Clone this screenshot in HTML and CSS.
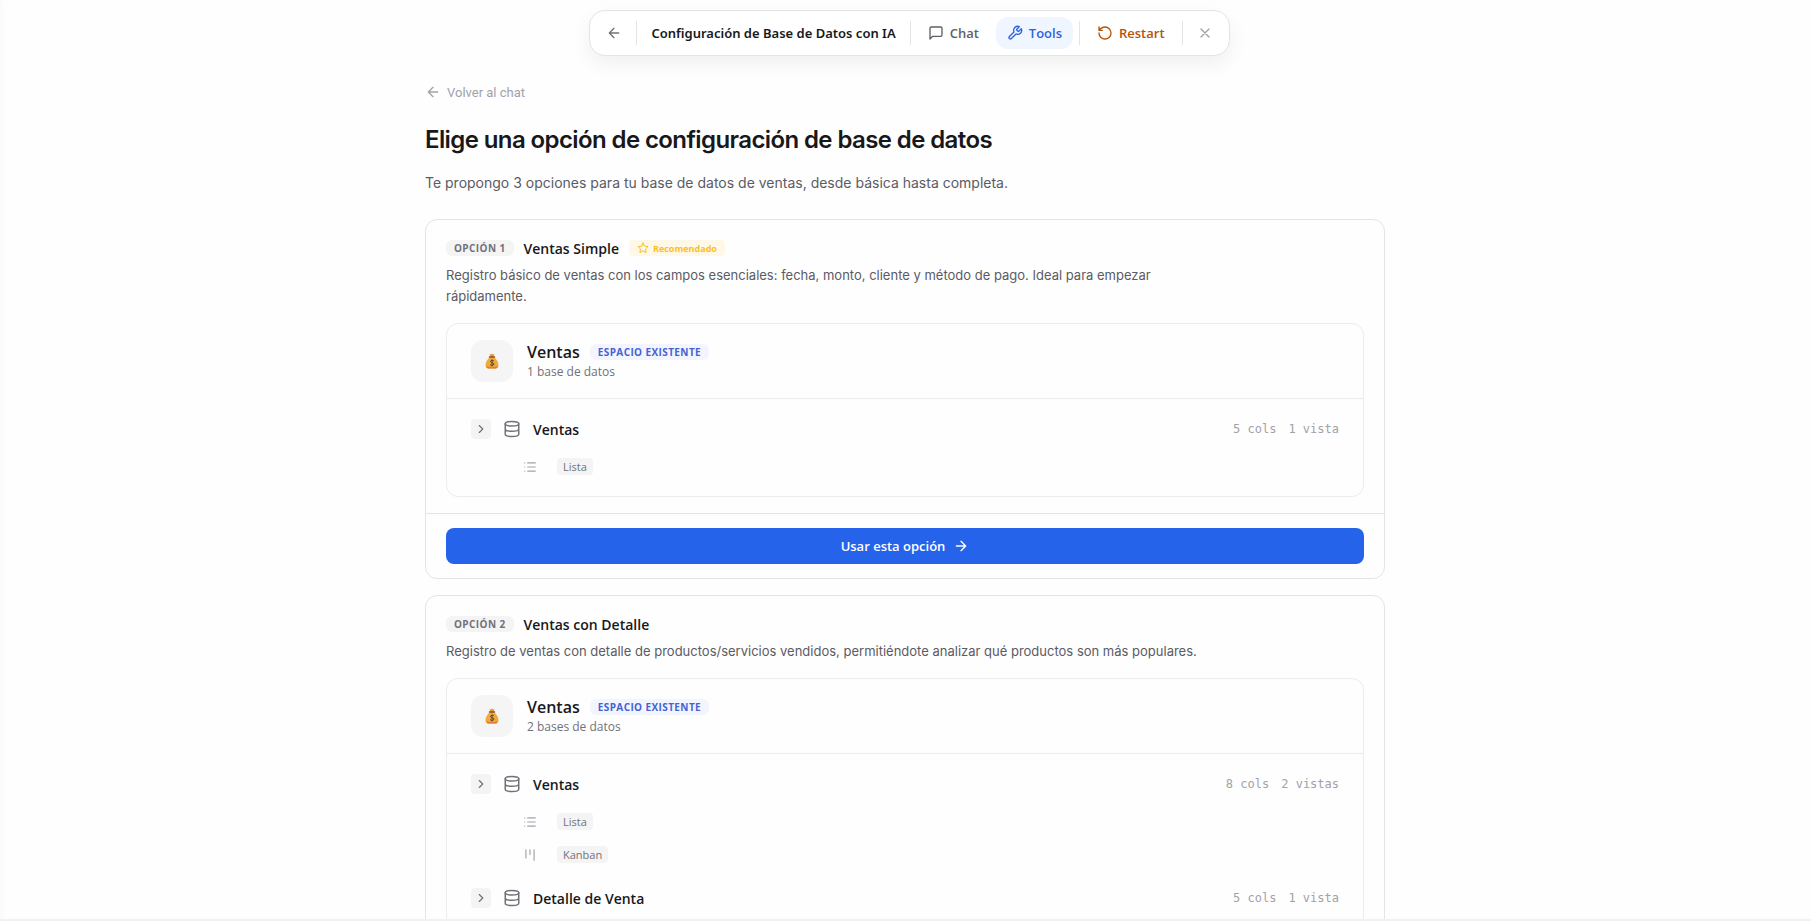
FILE: index.html
```html
<!DOCTYPE html>
<html lang="es">
<head>
    <meta charset="UTF-8">
    <meta name="viewport" content="width=device-width, initial-scale=1.0">
    <title>Configuración de Base de Datos con IA</title>
    <link rel="stylesheet" href="styles.css">
</head>
<body>

<!-- Iconos compartidos -->
<svg class="sprite" aria-hidden="true">
    <symbol id="arrow-left" viewBox="0 0 24 24"><path d="M12 19l-7-7 7-7M19 12H5"/></symbol>
    <symbol id="arrow-right" viewBox="0 0 24 24"><path d="M5 12h14M12 5l7 7-7 7"/></symbol>
    <symbol id="chevron" viewBox="0 0 24 24"><path d="M9 18l6-6-6-6"/></symbol>
    <symbol id="database" viewBox="0 0 24 24"><ellipse cx="12" cy="5" rx="9" ry="3"/><path d="M3 5v14a9 3 0 0 0 18 0V5M3 12a9 3 0 0 0 18 0"/></symbol>
    <symbol id="list" viewBox="0 0 24 24"><path d="M3 5h.01M3 12h.01M3 19h.01M8 5h13M8 12h13M8 19h13"/></symbol>
    <symbol id="kanban" viewBox="0 0 24 24"><path d="M5 3v14M12 3v8M19 3v18"/></symbol>
    <symbol id="money-bag" viewBox="0 0 28 32">
        <path d="M9 2l3 1 2-2 2 2 3-1-2 6h-6z" fill="#e39a2d"/>
        <path d="M10 8h8c5 4 9 10 9 16 0 5-3 7-7 7H8c-4 0-7-2-7-7C1 18 5 12 10 8z" fill="#f2a93b"/>
        <path d="M2 26c2 3 22 3 24 0-1 4-3 5-6 5H8c-3 0-5-1-6-5z" fill="#db7c2e"/>
        <path d="M9 8h10" stroke="#8a4b2a" stroke-width="3" stroke-linecap="round"/>
        <path d="M18 16c-1-2-7-2-7 1s7 2 7 5-6 4-8 1M14 13v14" fill="none" stroke="#5b4536" stroke-width="2"/>
    </symbol>
</svg>

<div class="app">
    <header class="toolbar-wrap">
        <nav class="toolbar">
            <button class="icon-button" aria-label="Volver"><svg class="icon"><use href="#arrow-left"/></svg></button>
            <span class="divider"></span>
            <span class="toolbar-title">Configuración de Base de Datos con IA</span>
            <span class="divider"></span>
            <button class="tool-button">
                <svg class="icon" viewBox="0 0 24 24"><path d="M21 15a2 2 0 0 1-2 2H7l-4 4V5a2 2 0 0 1 2-2h14a2 2 0 0 1 2 2z"/></svg>
                Chat
            </button>
            <button class="tool-button active">
                <svg class="icon" viewBox="0 0 24 24"><path d="M14.7 6.3a1 1 0 0 0 0 1.4l1.6 1.6a1 1 0 0 0 1.4 0l3.77-3.77a6 6 0 0 1-7.94 7.94l-6.91 6.91a2.12 2.12 0 0 1-3-3l6.91-6.91a6 6 0 0 1 7.94-7.94l-3.76 3.76z"/></svg>
                Tools
            </button>
            <span class="divider"></span>
            <button class="tool-button restart">
                <svg class="icon" viewBox="0 0 24 24"><path d="M3 12a9 9 0 1 0 9-9 9.75 9.75 0 0 0-6.74 2.74L3 8M3 3v5h5"/></svg>
                Restart
            </button>
            <span class="divider"></span>
            <button class="icon-button close" aria-label="Cerrar"><svg class="icon" viewBox="0 0 24 24"><path d="M18 6L6 18M6 6l12 12"/></svg></button>
        </nav>
    </header>

    <main class="content">
        <a class="back-link" href="#"><svg class="icon"><use href="#arrow-left"/></svg>Volver al chat</a>
        <h1>Elige una opción de configuración de base de datos</h1>
        <p class="intro">Te propongo 3 opciones para tu base de datos de ventas, desde básica hasta completa.</p>

        <!-- Opción 1 -->
        <section class="option">
            <div class="option-body">
                <div class="option-head">
                    <span class="tag">OPCIÓN 1</span>
                    <h2>Ventas Simple</h2>
                    <span class="recommended">
                        <svg class="icon icon-xs" viewBox="0 0 24 24"><path d="M12 2l3.1 6.3 6.9 1-5 4.9 1.2 6.8-6.2-3.2L5.8 21 7 14.2 2 9.3l6.9-1z"/></svg>
                        Recomendado
                    </span>
                </div>
                <p class="description">Registro básico de ventas con los campos esenciales: fecha, monto, cliente y método de pago. Ideal para empezar rápidamente.</p>

                <div class="space">
                    <div class="space-head">
                        <span class="space-icon"><svg><use href="#money-bag"/></svg></span>
                        <div>
                            <div class="space-title">
                                <h3>Ventas</h3>
                                <span class="tag existing">ESPACIO EXISTENTE</span>
                            </div>
                            <p class="space-count">1 base de datos</p>
                        </div>
                    </div>
                    <div class="space-body">
                        <div class="database">
                            <div class="database-row">
                                <button class="toggle" aria-label="Expandir Ventas"><svg class="icon icon-sm"><use href="#chevron"/></svg></button>
                                <svg class="icon icon-db"><use href="#database"/></svg>
                                <h4>Ventas</h4>
                                <span class="stats"><span>5 cols</span><span>1 vista</span></span>
                            </div>
                            <ul class="views">
                                <li><svg class="icon icon-sm"><use href="#list"/></svg><span class="chip">Lista</span></li>
                            </ul>
                        </div>
                    </div>
                </div>
            </div>
            <div class="option-footer">
                <button class="use-button">Usar esta opción <svg class="icon"><use href="#arrow-right"/></svg></button>
            </div>
        </section>

        <!-- Opción 2 -->
        <section class="option">
            <div class="option-body">
                <div class="option-head">
                    <span class="tag">OPCIÓN 2</span>
                    <h2>Ventas con Detalle</h2>
                </div>
                <p class="description">Registro de ventas con detalle de productos/servicios vendidos, permitiéndote analizar qué productos son más populares.</p>

                <div class="space">
                    <div class="space-head">
                        <span class="space-icon"><svg><use href="#money-bag"/></svg></span>
                        <div>
                            <div class="space-title">
                                <h3>Ventas</h3>
                                <span class="tag existing">ESPACIO EXISTENTE</span>
                            </div>
                            <p class="space-count">2 bases de datos</p>
                        </div>
                    </div>
                    <div class="space-body">
                        <div class="database">
                            <div class="database-row">
                                <button class="toggle" aria-label="Expandir Ventas"><svg class="icon icon-sm"><use href="#chevron"/></svg></button>
                                <svg class="icon icon-db"><use href="#database"/></svg>
                                <h4>Ventas</h4>
                                <span class="stats"><span>8 cols</span><span>2 vistas</span></span>
                            </div>
                            <ul class="views">
                                <li><svg class="icon icon-sm"><use href="#list"/></svg><span class="chip">Lista</span></li>
                                <li><svg class="icon icon-sm"><use href="#kanban"/></svg><span class="chip">Kanban</span></li>
                            </ul>
                        </div>
                        <div class="database">
                            <div class="database-row">
                                <button class="toggle" aria-label="Expandir Detalle de Venta"><svg class="icon icon-sm"><use href="#chevron"/></svg></button>
                                <svg class="icon icon-db"><use href="#database"/></svg>
                                <h4>Detalle de Venta</h4>
                                <span class="stats"><span>5 cols</span><span>1 vista</span></span>
                            </div>
                        </div>
                    </div>
                </div>
            </div>
        </section>
    </main>
</div>

</body>
</html>
```
FILE: styles.css
```css
* {
    box-sizing: border-box;
}
body {
    margin: 0;
    font-family: "Open Sans", "Noto Sans", sans-serif;
    font-size: 13px;
    color: #18181b;
    background-color: #fefefe;
}
h1, h2, h3, h4, p, ul {
    margin: 0;
    padding: 0;
}
button {
    font-family: inherit;
    border: none;
    background: none;
    padding: 0;
    cursor: pointer;
}
.sprite {
    display: none;
}
.app {
    height: 100vh;
    overflow: hidden;
    border-bottom: 2px solid #f1f2f4;
    box-shadow: inset 4px 0 4px -2px #f8f8f9;
}

/* Iconos */
.icon {
    width: 16px;
    height: 16px;
    flex: none;
    fill: none;
    stroke: currentColor;
    stroke-width: 2;
    stroke-linecap: round;
    stroke-linejoin: round;
}
.icon-sm {
    width: 14px;
    height: 14px;
}
.icon-xs {
    width: 12px;
    height: 12px;
}

/* Barra superior */
.toolbar-wrap {
    display: flex;
    justify-content: center;
    padding: 10px 0 0 8px;
}
.toolbar {
    display: flex;
    align-items: center;
    gap: 6px;
    height: 46px;
    padding: 0 8px;
    border: 1px solid #e4e4e7;
    border-radius: 16px;
    background-color: #fff;
    box-shadow: 0 8px 20px rgba(0, 0, 0, 0.06);
}
.icon-button {
    display: flex;
    align-items: center;
    justify-content: center;
    width: 32px;
    height: 32px;
    color: #71717a;
}
.close {
    color: #a1a1aa;
}
.divider {
    width: 1px;
    height: 24px;
    background-color: #e4e4e7;
}
.toolbar-title {
    padding: 0 8px;
    font-family: "Noto Sans", sans-serif;
    font-size: 13px;
    font-weight: 600;
}
.tool-button {
    display: flex;
    align-items: center;
    gap: 6px;
    height: 32px;
    padding: 0 11px;
    border-radius: 12px;
    font-size: 13px;
    font-weight: 600;
    color: #5f5f66;
}
.active {
    color: #2f62dc;
    background-color: #eff6ff;
}
.restart {
    color: #b45309;
}

/* Contenido */
.content {
    max-width: 1001px;
    margin: 0 auto;
    padding: 24px 21px 24px 20px;
}
.back-link {
    display: flex;
    align-items: center;
    gap: 6px;
    height: 24px;
    font-family: Roboto, sans-serif;
    color: #a1a1aa;
    text-decoration: none;
}
h1 {
    margin-top: 20px;
    font-family: Inter, sans-serif;
    font-size: 24px;
    font-weight: 600;
    line-height: 32px;
    letter-spacing: -0.025em;
}
.intro {
    margin: 16px 0 25px;
    font-family: Inter, sans-serif;
    font-size: 14px;
    line-height: 22px;
    color: #5b5b63;
}

/* Tarjeta de opción */
.option {
    margin-bottom: 16px;
    border: 1px solid #e4e4e7;
    border-radius: 12px;
}
.option-body {
    padding: 16px 20px;
}
.option-head {
    display: flex;
    align-items: center;
    gap: 10px;
    height: 24px;
}
.tag {
    height: 16px;
    padding: 0 8px;
    border-radius: 6px;
    font-size: 10px;
    font-weight: 700;
    line-height: 16px;
    letter-spacing: 0.04em;
    color: #71717a;
    background-color: #f4f4f5;
}
h2 {
    font-size: 14px;
    font-weight: 600;
}
.recommended {
    display: flex;
    align-items: center;
    gap: 4px;
    height: 16px;
    padding: 0 8px;
    border-radius: 4px;
    font-size: 9px;
    font-weight: 700;
    color: #fbbf24;
    background-color: #fff8e6;
}
.description {
    max-width: 760px;
    margin: 5px 0 16px;
    font-family: Inter, sans-serif;
    font-size: 13px;
    line-height: 21px;
    color: #5b5b63;
}

/* Espacio con sus bases de datos */
.space {
    border: 1px solid #ececee;
    border-radius: 12px;
}
.space-head {
    display: flex;
    align-items: center;
    gap: 14px;
    padding: 16px 24px;
    border-bottom: 1px solid #ececee;
}
.space-icon {
    display: flex;
    align-items: center;
    justify-content: center;
    width: 42px;
    height: 42px;
    border-radius: 12px;
    background-color: #f5f5f5;
}
.space-icon svg {
    width: 14px;
    height: 16px;
}
.space-title {
    display: flex;
    align-items: center;
    gap: 10px;
    height: 22px;
}
h3 {
    font-size: 16px;
    font-weight: 600;
}
.existing {
    color: #4562d4;
    background-color: #f3f5fe;
}
.space-count {
    font-size: 12px;
    line-height: 18px;
    color: #71717a;
}
.space-body {
    padding: 12px 24px;
}
.database + .database {
    margin-top: 8px;
}
.database-row {
    display: flex;
    align-items: center;
    height: 36px;
}
.toggle {
    display: flex;
    align-items: center;
    justify-content: center;
    width: 20px;
    height: 20px;
    margin-right: 12px;
    border-radius: 4px;
    color: #71717a;
    background-color: #f4f4f5;
}
.icon-db {
    width: 18px;
    height: 18px;
    color: #71717a;
}
h4 {
    margin-left: 12px;
    font-size: 14px;
    font-weight: 600;
}
.stats {
    display: flex;
    gap: 12px;
    margin-left: auto;
    font-family: "DejaVu Sans Mono", monospace;
    font-size: 12px;
    color: #a1a1aa;
}
.views {
    padding: 3px 0 1px 52px;
    list-style: none;
}
.views li {
    display: flex;
    align-items: center;
    gap: 20px;
    height: 33px;
    color: #a1a1aa;
}
.chip {
    padding: 0 6px;
    border-radius: 4px;
    font-size: 11px;
    line-height: 17px;
    color: #71717a;
    background-color: #f4f4f5;
}

/* Pie con el botón */
.option-footer {
    padding: 14px 20px;
    border-top: 1px solid #e4e4e7;
}
.use-button {
    display: flex;
    align-items: center;
    justify-content: center;
    gap: 8px;
    width: 100%;
    height: 36px;
    border-radius: 8px;
    font-size: 13px;
    font-weight: 600;
    color: #fff;
    background-color: #2563eb;
}
.use-button:hover {
    background-color: #1d4ed8;
}
```
